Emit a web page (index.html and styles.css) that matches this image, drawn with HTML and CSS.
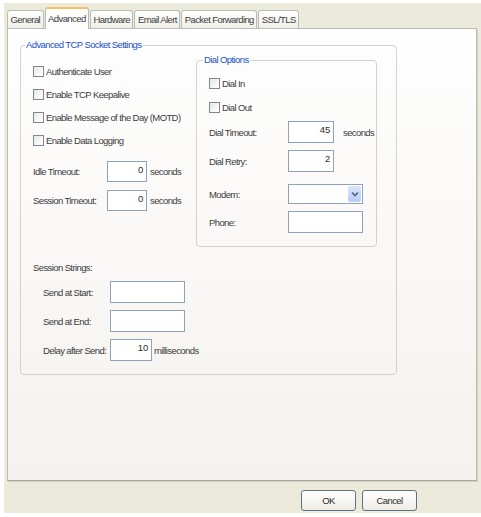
FILE: index.html
```html
<!DOCTYPE html>
<html>
<head>
<meta charset="utf-8">
<link rel="stylesheet" href="styles.css">
</head>
<body>
<div class="window">
  <div class="tabs">
    <div class="tab">General</div>
    <div class="tab active">Advanced</div>
    <div class="tab">Hardware</div>
    <div class="tab">Email Alert</div>
    <div class="tab">Packet Forwarding</div>
    <div class="tab">SSL/TLS</div>
  </div>
  <div class="panel">
    <fieldset class="group outer">
      <legend>Advanced TCP Socket Settings</legend>
      <div class="cols">
        <div class="leftcol">
          <div class="check"><span class="box"></span>Authenticate User</div>
          <div class="check"><span class="box"></span>Enable TCP Keepalive</div>
          <div class="check"><span class="box"></span>Enable Message of the Day (MOTD)</div>
          <div class="check"><span class="box"></span>Enable Data Logging</div>
          <div class="row idle"><span class="lbl lbl-t">Idle Timeout:</span><span class="input num">0</span><span class="unit">seconds</span></div>
          <div class="row sess"><span class="lbl lbl-t">Session Timeout:</span><span class="input num">0</span><span class="unit">seconds</span></div>
          <div class="subhead">Session Strings:</div>
          <div class="row str"><span class="lbl lbl-s">Send at Start:</span><span class="input wide"></span></div>
          <div class="row str"><span class="lbl lbl-s">Send at End:</span><span class="input wide"></span></div>
          <div class="row str"><span class="lbl lbl-s">Delay after Send:</span><span class="input num small">10</span><span class="unit tight">milliseconds</span></div>
        </div>
        <fieldset class="group dial">
          <legend>Dial Options</legend>
          <div class="check dcheck"><span class="box"></span>Dial In</div>
          <div class="check dcheck"><span class="box"></span>Dial Out</div>
          <div class="row dt"><span class="lbl lbl-d">Dial Timeout:</span><span class="input num dnum">45</span><span class="unit wideunit">seconds</span></div>
          <div class="row dr"><span class="lbl lbl-d">Dial Retry:</span><span class="input num dnum">2</span></div>
          <div class="row dm"><span class="lbl lbl-d">Modem:</span><span class="input select"><span class="drop"><svg width="8" height="6" viewBox="0 0 8 6"><path d="M1 1.5 L4 4.5 L7 1.5" fill="none" stroke="#4d6185" stroke-width="1.6"/></svg></span></span></div>
          <div class="row dp"><span class="lbl lbl-d">Phone:</span><span class="input dwide"></span></div>
        </fieldset>
      </div>
    </fieldset>
  </div>
  <div class="buttons">
    <div class="btn">OK</div>
    <div class="btn">Cancel</div>
  </div>
</div>
</body>
</html>
```
FILE: styles.css
```css
html, body {
  margin: 0;
  padding: 0;
  background: #ffffff;
}
body {
  width: 481px;
  height: 517px;
  overflow: hidden;
  font-family: "Liberation Sans", Arial, sans-serif;
  font-size: 9.5px;
  letter-spacing: -0.6px;
  color: #3c3c3c;
}
.window {
  margin: 3px 0 0 4px;
  width: 477px;
  height: 510px;
  background: #ecebdb;
  padding: 0 0 0 3px;
  box-sizing: border-box;
}
.tabs {
  display: flex;
  align-items: flex-end;
  height: 25px;
  padding-left: 0;
}
.tab {
  height: 17px;
  line-height: 17px;
  padding: 0 2.5px;
  border: 1px solid #b9bcb4;
  border-bottom: none;
  border-radius: 3px 3px 0 0;
  background: linear-gradient(#ffffff, #f0efe8);
  margin-right: 1px;
  color: #3c3c3c;
}
.tab.active {
  height: 20px;
  line-height: 19px;
  background: #fdfdfc;
  border-top: 2px solid #f5c26a;
  margin-bottom: -1px;
  position: relative;
  z-index: 1;
  padding: 0 2.5px;
}
.panel {
  width: 470px;
  height: 453px;
  box-sizing: border-box;
  border: 1px solid #bdbdb5;
  border-bottom-color: #a8a59c;
  box-shadow: 1px 1px 0 #d2cfc4;
  background: linear-gradient(#fefefe, #f4f2ee);
  padding-top: 10px;
}
.group {
  border: 1px solid #d2d2c6;
  border-radius: 4px;
  margin: 0;
  padding: 0;
  min-width: 0;
}
.group legend {
  color: #2150c8;
  line-height: 12px;
  padding: 0 1px;
}
.outer legend { margin-left: -8px; }
.dial legend { margin-left: -6px; }
.outer {
  margin-left: 12px;
  width: 377px;
  box-sizing: border-box;
  padding: 0 0 13px 12px;
}
.cols {
  display: flex;
  align-items: flex-start;
}
.leftcol {
  width: 163px;
  padding-top: 9px;
  flex: none;
}
.check {
  display: flex;
  align-items: center;
  height: 23px;
  white-space: nowrap;
}
.box {
  width: 11px;
  height: 11px;
  box-sizing: border-box;
  border: 1px solid #7e8794;
  background: linear-gradient(135deg, #e9e9e2, #ffffff);
  margin-right: 2px;
  flex: none;
}
.row {
  display: flex;
  align-items: center;
  white-space: nowrap;
}
.lbl {
  flex: none;
}
.lbl-t { width: 74px; }
.lbl-s { width: 67px; margin-left: 10px; }
.lbl-d { width: 79px; }
.input {
  box-sizing: border-box;
  height: 21px;
  border: 1px solid #8fa3b8;
  background: #ffffff;
  flex: none;
  color: #2a2a2a;
  font-size: 9.5px;
  letter-spacing: -0.2px;
}
.num {
  width: 40px;
  text-align: right;
  padding-right: 3px;
  line-height: 15px;
}
.unit {
  margin-left: 3px;
}
.unit.tight { margin-left: 2px; }
.idle { margin-top: 9px; }
.sess { margin-top: 8px; }
.subhead {
  margin-top: 50px;
  line-height: 13px;
}
.str { margin-top: 7px; }
.str .input { height: 22px; }
.wide { width: 75px; }
.small { width: 42px; }

.dial {
  width: 181px;
  box-sizing: border-box;
  margin-top: 3px;
  padding: 5px 0 13px 12px;
  flex: none;
}
.dcheck { height: 24px; }
.dcheck + .dcheck { height: 25px; }
.dnum { width: 46px; height: 22px; }
.wideunit { margin-left: 9px; }
.dt { margin-top: 1px; }
.dr { margin-top: 7px; }
.dm { margin-top: 12px; }
.dp { margin-top: 7px; }
.dp .input { height: 22px; }
.dwide { width: 75px; }
.select {
  width: 75px;
  height: 20px;
  display: flex;
  justify-content: flex-end;
  padding: 1px;
}
.drop {
  width: 13px;
  height: 100%;
  background: linear-gradient(#dbe5fb, #b8cbf3);
  border-radius: 2px;
  display: flex;
  align-items: center;
  justify-content: center;
}
.buttons {
  display: flex;
  justify-content: flex-end;
  padding: 9px 64px 0 0;
  gap: 6px;
}
.btn {
  width: 55px;
  height: 21px;
  box-sizing: border-box;
  border: 1px solid #5f7185;
  border-radius: 3px;
  background: linear-gradient(#ffffff, #eeece4);
  text-align: center;
  line-height: 19px;
  color: #2c2c2c;
}
```
